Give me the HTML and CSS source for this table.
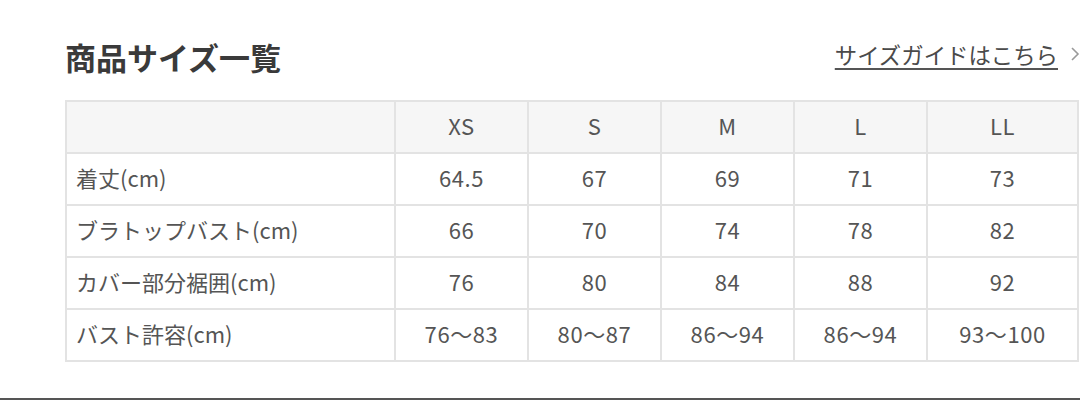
FILE: index.html
```html
<!DOCTYPE html>
<html lang="ja">
<head>
<meta charset="utf-8">
<link rel="stylesheet" href="styles.css">
</head>
<body>
<section class="size">
  <div class="size-head">
    <h2 class="size-title">商品サイズ一覧</h2>
    <a class="guide-link" href="#"><span class="guide-text">サイズガイドはこちら</span><svg class="chev" width="10" height="16" viewBox="0 0 10 16"><polyline points="2,2 8,8 2,14" fill="none" stroke="#9a9a9a" stroke-width="1.6"/></svg></a>
  </div>
  <table class="size-table">
    <colgroup>
      <col class="c-label"><col class="c-size"><col class="c-size"><col class="c-size"><col class="c-size"><col class="c-last">
    </colgroup>
    <thead>
      <tr><th></th><th>XS</th><th>S</th><th>M</th><th>L</th><th>LL</th></tr>
    </thead>
    <tbody>
      <tr><td class="label">着丈(cm)</td><td>64.5</td><td>67</td><td>69</td><td>71</td><td>73</td></tr>
      <tr><td class="label">ブラトップバスト(cm)</td><td>66</td><td>70</td><td>74</td><td>78</td><td>82</td></tr>
      <tr><td class="label">カバー部分裾囲(cm)</td><td>76</td><td>80</td><td>84</td><td>88</td><td>92</td></tr>
      <tr><td class="label">バスト許容(cm)</td><td>76～83</td><td>80～87</td><td>86～94</td><td>86～94</td><td>93～100</td></tr>
    </tbody>
  </table>
</section>
<div class="bottom-bar"></div>
</body>
</html>
```
FILE: styles.css
```css
html, body {
  margin: 0;
  padding: 0;
  background: #fff;
  overflow: hidden;
}
body {
  width: 1080px;
  height: 400px;
  font-family: "Noto Sans CJK JP", "Noto Sans", sans-serif;
  color: #555;
  display: flex;
  flex-direction: column;
}
.size {
  padding: 34px 0 0 65px;
  flex: 1;
}
.size-head {
  display: flex;
  justify-content: space-between;
  align-items: center;
  height: 46px;
  margin-bottom: 20px;
}
.size-title {
  margin: 0;
  font-size: 31px;
  font-weight: 700;
  color: #3a3a3a;
  line-height: 46px;
}
.guide-link {
  display: flex;
  align-items: center;
  gap: 12px;
  color: #4a4a4a;
  text-decoration: none;
  font-size: 22.4px;
  margin-top: -6px;
}
.guide-text {
  text-decoration: underline;
  text-underline-offset: 4px;
  text-decoration-thickness: 2px;
  text-decoration-color: #555;
}
.chev {
  display: block;
}
.size-table {
  border-collapse: collapse;
  table-layout: fixed;
  width: 1012px;
  font-size: 22px;
  color: #555;
}
.c-label { width: 329px; }
.c-size { width: 133px; }
.c-last { width: 151px; }
.size-table th,
.size-table td {
  border: 2px solid #e3e3e3;
  height: 52px;
  box-sizing: border-box;
  padding: 0 0 5px;
  text-align: center;
  font-weight: 400;
  vertical-align: middle;
  letter-spacing: 0.6px;
}
.size-table thead th {
  background: #f6f6f6;
}
.size-table td.label {
  text-align: left;
  padding-left: 9px;
  letter-spacing: 0;
}
.bottom-bar {
  height: 2px;
  background: #555;
}
```
